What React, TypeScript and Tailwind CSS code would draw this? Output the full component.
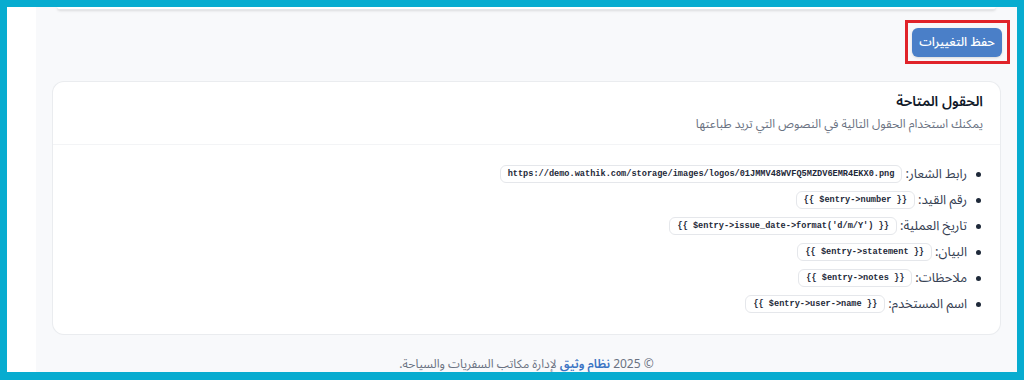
const fields = [
    { label: "رابط الشعار:", code: "https://demo.wathik.com/storage/images/logos/01JMMV48WVFQ5MZDV6EMR4EKX0.png" },
    { label: "رقم القيد:", code: "{{ $entry->number }}" },
    { label: "تاريخ العملية:", code: "{{ $entry->issue_date->format('d/m/Y') }}" },
    { label: "البيان:", code: "{{ $entry->statement }}" },
    { label: "ملاحظات:", code: "{{ $entry->notes }}" },
    { label: "اسم المستخدم:", code: "{{ $entry->user->name }}" },
];

const App = () => {
    return (
        <div
            className="w-[1024px] h-[380px] overflow-hidden border-[7px] border-b-[8px] border-[#07acd0] flex bg-white"
            style={{ fontFamily: '"Noto Sans Arabic", "DejaVu Sans", "Noto Sans", sans-serif' }}
        >
            {/* side strip */}
            <div className="w-[29px] shrink-0 bg-white" />

            {/* main */}
            <main dir="rtl" className="flex-1 bg-[#f8f9fb] px-4 flex flex-col">
                {/* header edge */}
                <div className="h-[3px] mx-[5px] bg-white border-b border-gray-200 rounded-b-md shadow-sm" />

                {/* actions */}
                <div className="mt-[10px] flex">
                    <div className="-mr-[9px] border-[3px] border-[#e0232a] pt-[5px] pb-[4px] pr-[5px] pl-[4px]">
                        <button className="h-[29px] w-[90px] rounded-md bg-[#4a7fc8] text-white text-[12.5px] font-medium shadow-sm">
                            حفظ التغييرات
                        </button>
                    </div>
                </div>

                {/* fields card */}
                <section className="mt-[17px] bg-white rounded-xl border border-gray-200/80">
                    <div className="px-[17px] pt-[10px] pb-[11px] border-b border-gray-100">
                        <h2 className="text-[14px] font-semibold text-gray-900 leading-[19px] mb-[6px]">الحقول المتاحة</h2>
                        <p className="text-[12px] text-gray-500 leading-[16px]">
                            يمكنك استخدام الحقول التالية في النصوص التي تريد طباعتها
                        </p>
                    </div>

                    <ul className="pr-[19px] pt-[20px] pb-[21px] flex flex-col gap-[8px]">
                        {fields.map((f) => (
                            <li key={f.label} className="flex items-center h-[18px]">
                                <span className="w-[5px] h-[5px] rounded-full bg-gray-800 shrink-0" />
                                <span className="mr-[9px] text-[13px] text-gray-700 leading-none">{f.label}</span>
                                <code
                                    dir="ltr"
                                    className="mr-[3px] h-[18px] flex items-center px-[7px] rounded-md border border-gray-200 bg-white text-[8.6px] font-bold text-gray-800"
                                    style={{ fontFamily: '"Liberation Mono", "DejaVu Sans Mono", monospace' }}
                                >
                                    {f.code}
                                </code>
                            </li>
                        ))}
                    </ul>
                </section>

                {/* footer */}
                <footer className="mt-auto mb-[1px] text-center text-[12px] text-gray-500 leading-[13px]">
                    © 2025 <span className="text-[#3b74c4] font-semibold">نظام وثيق</span> لإدارة مكاتب السفريات والسياحة.
                </footer>
            </main>
        </div>
    );
};

export default App;
